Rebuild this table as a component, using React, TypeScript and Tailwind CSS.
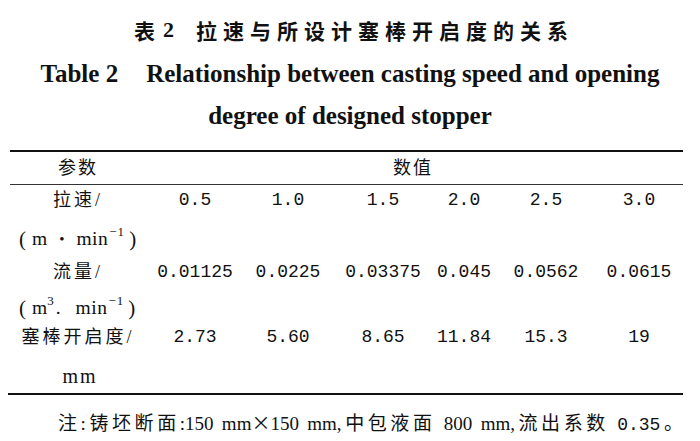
import React from "react";

const cjk = { fontFamily: '"Liberation Serif", "Noto Sans CJK SC", serif' };
const mono = { fontFamily: '"Liberation Mono", "Noto Sans CJK SC", monospace' };
const heiti = { fontFamily: '"Noto Sans CJK SC", sans-serif' };
const times = { fontFamily: '"Liberation Serif", serif' };

const cols = "grid grid-cols-[156px_78px_108px_82px_80px_84px_102px] items-center";

function ValueRow({ label, values }: { label: React.ReactNode; values: string[] }) {
  return (
    <div className={cols + " h-[20px] leading-[20px]"}>
      <div className="text-center">{label}</div>
      {values.map((v, i) => (
        <div key={i} className="text-center text-[18px]" style={mono}>
          {v}
        </div>
      ))}
    </div>
  );
}

function Unit({ children }: { children: React.ReactNode }) {
  return (
    <div className="h-[20px] leading-[20px] pl-[19px] flex items-center text-[19.5px]" style={times}>
      <span className="text-[21px] mr-[6px]">(</span>
      {children}
      <span className="text-[21px] ml-[4px]">)</span>
    </div>
  );
}

export default function App() {
  return (
    <div className="w-[700px] h-[441px] bg-white text-[#111] overflow-hidden">
      <div className="pt-[18px] flex flex-col items-center">
        <div className="h-[24px] leading-[24px] text-[21px] font-bold flex items-center pl-[2px]" style={heiti}>
          <span>表</span>
          <span className="ml-[8px] text-[22px]" style={times}>2</span>
          <span className="ml-[22px] tracking-[6px] mr-[-6px]">拉速与所设计塞棒开启度的关系</span>
        </div>
        <div className="mt-[19px] h-[26px] leading-[26px] text-[25px] font-bold" style={times}>
          Table 2<span className="inline-block w-[28px]"></span>Relationship between casting speed and opening
        </div>
        <div className="mt-[16px] h-[26px] leading-[26px] text-[25px] font-bold" style={times}>
          degree of designed stopper
        </div>
      </div>

      <div className="ml-[10px] w-[673px] mt-[21px] h-[2px] bg-[#111]" />
      <div className={cols + " h-[32px]"}>
        <div className="text-center text-[18px] tracking-[2px]" style={cjk}>参数</div>
        <div className="col-span-6 text-center text-[18px] tracking-[2px] pr-[20px]" style={cjk}>数值</div>
      </div>
      <div className="ml-[10px] w-[673px] h-[1px] bg-[#333]" />

      <div className="text-[18px]" style={cjk}>
        <div className="mt-[5px]">
          <ValueRow
            label={<span className="tracking-[3px]">拉速/</span>}
            values={["0.5", "1.0", "1.5", "2.0", "2.5", "3.0"]}
          />
        </div>
        <div className="mt-[19px]">
          <Unit>
            <span>m</span>
            <span className="mx-[12px] text-[15px]">•</span>
            <span className="tracking-[0.5px]">min</span>
            <span className="text-[13px] relative top-[-7px] ml-[1px] tracking-[1px]">−1</span>
          </Unit>
        </div>
        <div className="mt-[13px]">
          <ValueRow
            label={<span className="tracking-[3px]">流量/</span>}
            values={["0.01125", "0.0225", "0.03375", "0.045", "0.0562", "0.0615"]}
          />
        </div>
        <div className="mt-[16px]">
          <Unit>
            <span>m</span>
            <span className="text-[13px] relative top-[-7px]">3</span>
            <span className="ml-[2px] mr-[15px]">.</span>
            <span className="tracking-[0.5px]">min</span>
            <span className="text-[13px] relative top-[-7px] ml-[1px] tracking-[1px]">−1</span>
          </Unit>
        </div>
        <div className="mt-[9px]">
          <ValueRow
            label={<span className="tracking-[3px]">塞棒开启度/</span>}
            values={["2.73", "5.60", "8.65", "11.84", "15.3", "19"]}
          />
        </div>
        <div className="mt-[19px] h-[20px] leading-[20px] w-[160px] text-center text-[20px] tracking-[2px]" style={times}>
          mm
        </div>
      </div>
      <div className="ml-[8px] w-[675px] mt-[7px] h-[2px] bg-[#111]" />

      <div
        className="mt-[17px] ml-[58px] w-[625px] h-[20px] leading-[20px] text-[19px] whitespace-nowrap text-justify [text-align-last:justify]"
        style={cjk}
      >
        注:铸坯断面:150 mm<span style={heiti}>×</span>150 mm,中包液面 800 mm,流出系数 <span className="text-[18px]" style={mono}>0.35</span>。
      </div>
    </div>
  );
}
